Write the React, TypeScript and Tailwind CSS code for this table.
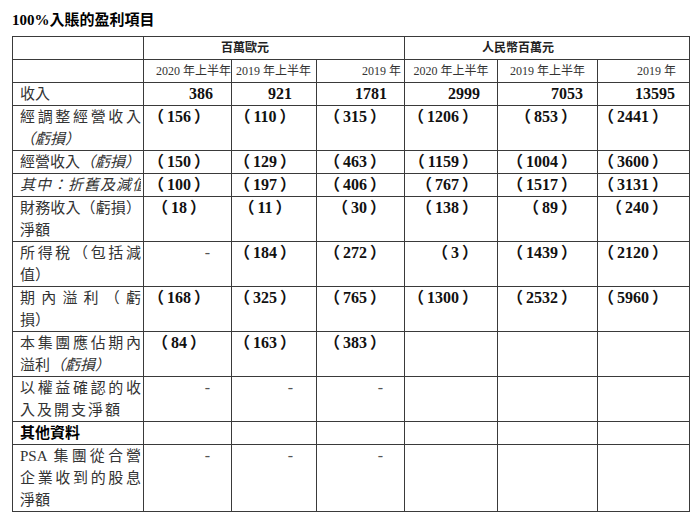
import React from 'react';

type Row = {
    label: React.ReactNode;
    values: (string | null)[];
};

// per column: how parenthesised, plain and dash values sit in the cell
const colCls = [
    { paren: 'text-center pr-[17px]', plain: 'text-right pr-[18px]', dash: 'text-right pr-[21px]' },
    { paren: 'text-center pr-[18px]', plain: 'text-right pr-[24px]', dash: 'text-right pr-[23px]' },
    { paren: 'text-right pr-[18px]', plain: 'text-right pr-[17px]', dash: 'text-right pr-[21px]' },
    { paren: 'text-right pr-[19px]', plain: 'text-right pr-[17px]', dash: 'text-right pr-[21px]' },
    { paren: 'text-right pr-[20px]', plain: 'text-right pr-[14px]', dash: 'text-right pr-[21px]' },
    { paren: 'text-right pr-[21px]', plain: 'text-right pr-[14px]', dash: 'text-right pr-[21px]' },
];

const J = ({ children, className = '' }: { children: React.ReactNode; className?: string }) => (
    <div className={`text-justify [text-align-last:justify] ${className}`}>{children}</div>
);

const rows: Row[] = [
    { label: <div>收入</div>, values: ['386', '921', '1781', '2999', '7053', '13595'] },
    {
        label: (
            <>
                <J>經調整經營收入</J>
                <div><i>（虧損）</i></div>
            </>
        ),
        values: ['(156)', '(110)', '(315)', '(1206)', '(853)', '(2441)'],
    },
    {
        label: <div className="whitespace-nowrap">經營收入<i>（虧損）</i></div>,
        values: ['(150)', '(129)', '(463)', '(1159)', '(1004)', '(3600)'],
    },
    {
        label: <div className="whitespace-nowrap overflow-hidden italic tracking-[1px]">其中：折舊及減值</div>,
        values: ['(100)', '(197)', '(406)', '(767)', '(1517)', '(3131)'],
    },
    {
        label: (
            <>
                <J>財務收入（虧損）</J>
                <div>淨額</div>
            </>
        ),
        values: ['(18)', '(11)', '(30)', '(138)', '(89)', '(240)'],
    },
    {
        label: (
            <>
                <J>所得稅（包括減</J>
                <div>值）</div>
            </>
        ),
        values: ['-', '(184)', '(272)', '(3)', '(1439)', '(2120)'],
    },
    {
        label: (
            <>
                <J>期內溢利（虧</J>
                <div>損）</div>
            </>
        ),
        values: ['(168)', '(325)', '(765)', '(1300)', '(2532)', '(5960)'],
    },
    {
        label: (
            <>
                <J>本集團應佔期內</J>
                <div>溢利<i>（虧損）</i></div>
            </>
        ),
        values: ['(84)', '(163)', '(383)', null, null, null],
    },
    {
        label: (
            <>
                <J>以權益確認的收</J>
                <div className="tracking-[2px]">入及開支淨額</div>
            </>
        ),
        values: ['-', '-', '-', null, null, null],
    },
    {
        label: <div className="font-bold text-black">其他資料</div>,
        values: [null, null, null, null, null, null],
    },
    {
        label: (
            <>
                <J>PSA 集團從合營</J>
                <J>企業收到的股息</J>
                <div>淨額</div>
            </>
        ),
        values: ['-', '-', '-', null, null, null],
    },
];

const cellBase = 'border-r border-b border-[#3a3a3a] p-0 align-top';

function Value({ v, col }: { v: string | null; col: number }) {
    if (v === null) return <td className={cellBase} />;
    const c = colCls[col];
    if (v === '-') {
        return <td className={`${cellBase} ${c.dash} text-[#555]`}>-</td>;
    }
    if (v.startsWith('(')) {
        return (
            <td className={`${cellBase} ${c.paren} font-bold text-[#111]`}>
                （<span className="px-[3px]">{v.slice(1, -1)}</span>）
            </td>
        );
    }
    return <td className={`${cellBase} ${c.plain} font-bold text-[#111]`}>{v}</td>;
}

export default function App() {
    return (
        <div className="w-[700px] h-[532px] bg-white font-['Liberation_Serif','Noto_Sans_CJK_TC',serif] text-[#2a2a2a]">
            <div className="h-[36px] pl-[12px] pt-[10px] text-[15px] leading-[20px] font-bold text-black">
                100%入賬的盈利項目
            </div>
            <table className="ml-[12px] w-[678px] table-fixed border-separate border-spacing-0 border-l border-t border-[#3a3a3a] leading-[22px]">
                <colgroup>
                    <col className="w-[131px]" />
                    <col className="w-[88px]" />
                    <col className="w-[85px]" />
                    <col className="w-[88px]" />
                    <col className="w-[93px]" />
                    <col className="w-[100px]" />
                    <col className="w-[92px]" />
                </colgroup>
                <thead>
                    <tr className="text-[12px]">
                        <th className={cellBase} />
                        <th colSpan={3} className={`${cellBase} text-center pr-[58px] font-bold text-[#222]`}>
                            百萬歐元
                        </th>
                        <th colSpan={3} className={`${cellBase} text-center pr-[58px] font-bold text-[#222]`}>
                            人民幣百萬元
                        </th>
                    </tr>
                    <tr className="text-[12px] font-normal text-[#333]">
                        <th className={cellBase} />
                        <th className={`${cellBase} font-normal text-right whitespace-nowrap`}>2020 年上半年</th>
                        <th className={`${cellBase} font-normal text-left pl-[4px] whitespace-nowrap`}>2019 年上半年</th>
                        <th className={`${cellBase} font-normal text-right pr-[3px]`}>2019 年</th>
                        <th className={`${cellBase} font-normal text-center whitespace-nowrap`}>2020 年上半年</th>
                        <th className={`${cellBase} font-normal text-center whitespace-nowrap`}>2019 年上半年</th>
                        <th className={`${cellBase} font-normal text-right pr-[13px]`}>2019 年</th>
                    </tr>
                </thead>
                <tbody>
                    {rows.map((row, i) => (
                        <tr key={i} className="text-[16px]">
                            <td className={`${cellBase} pl-[7px] pr-[2px] text-[15px] text-[#333]`}>{row.label}</td>
                            {row.values.map((v, j) => (
                                <Value key={j} v={v} col={j} />
                            ))}
                        </tr>
                    ))}
                </tbody>
            </table>
        </div>
    );
}
